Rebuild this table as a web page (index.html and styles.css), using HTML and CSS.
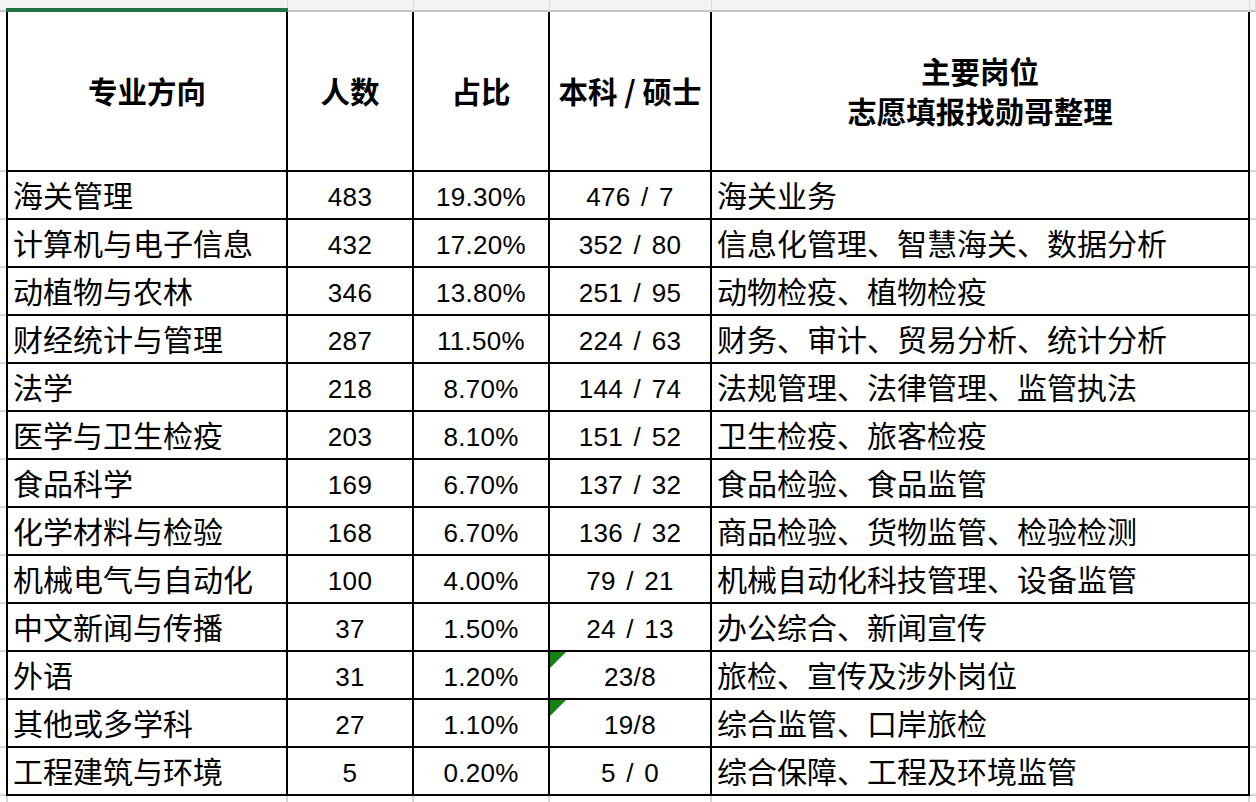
FILE: index.html
```html
<!DOCTYPE html>
<html lang="zh-CN">
<head>
<meta charset="utf-8">
<title>海关专业方向统计</title>
<link rel="stylesheet" href="styles.css">
</head>
<body>
<div class="sheet">
  <div class="colbar">
    <div class="ch ch-corner"></div>
    <div class="ch ch-a"><span class="sel"></span></div>
    <div class="ch ch-b"></div>
    <div class="ch ch-c"></div>
    <div class="ch ch-d"></div>
    <div class="ch ch-e"></div>
    <div class="ch ch-rest"></div>
  </div>
  <div class="main">
    <div class="gutter gutter-left">
      <div></div><div></div><div></div><div></div><div></div><div></div><div></div>
      <div></div><div></div><div></div><div></div><div></div><div></div><div></div>
    </div>
    <div class="grid">
      <div class="h">专业方向</div>
      <div class="h">人数</div>
      <div class="h">占比</div>
      <div class="h">本科 / 硕士</div>
      <div class="h h2">主要岗位<br>志愿填报找勋哥整理</div>

      <div class="t">海关管理</div><div class="n">483</div><div class="n">19.30%</div><div class="n">476 / 7</div><div class="t">海关业务</div>
      <div class="t">计算机与电子信息</div><div class="n">432</div><div class="n">17.20%</div><div class="n">352 / 80</div><div class="t">信息化管理、智慧海关、数据分析</div>
      <div class="t">动植物与农林</div><div class="n">346</div><div class="n">13.80%</div><div class="n">251 / 95</div><div class="t">动物检疫、植物检疫</div>
      <div class="t">财经统计与管理</div><div class="n">287</div><div class="n">11.50%</div><div class="n">224 / 63</div><div class="t">财务、审计、贸易分析、统计分析</div>
      <div class="t">法学</div><div class="n">218</div><div class="n">8.70%</div><div class="n">144 / 74</div><div class="t">法规管理、法律管理、监管执法</div>
      <div class="t">医学与卫生检疫</div><div class="n">203</div><div class="n">8.10%</div><div class="n">151 / 52</div><div class="t">卫生检疫、旅客检疫</div>
      <div class="t">食品科学</div><div class="n">169</div><div class="n">6.70%</div><div class="n">137 / 32</div><div class="t">食品检验、食品监管</div>
      <div class="t">化学材料与检验</div><div class="n">168</div><div class="n">6.70%</div><div class="n">136 / 32</div><div class="t">商品检验、货物监管、检验检测</div>
      <div class="t">机械电气与自动化</div><div class="n">100</div><div class="n">4.00%</div><div class="n">79 / 21</div><div class="t">机械自动化科技管理、设备监管</div>
      <div class="t">中文新闻与传播</div><div class="n">37</div><div class="n">1.50%</div><div class="n">24 / 13</div><div class="t">办公综合、新闻宣传</div>
      <div class="t">外语</div><div class="n">31</div><div class="n">1.20%</div><div class="n flag">23/8</div><div class="t">旅检、宣传及涉外岗位</div>
      <div class="t">其他或多学科</div><div class="n">27</div><div class="n">1.10%</div><div class="n flag">19/8</div><div class="t">综合监管、口岸旅检</div>
      <div class="t">工程建筑与环境</div><div class="n">5</div><div class="n">0.20%</div><div class="n">5 / 0</div><div class="t">综合保障、工程及环境监管</div>
    </div>
    <div class="gutter gutter-right">
      <div></div><div></div><div></div><div></div><div></div><div></div><div></div>
      <div></div><div></div><div></div><div></div><div></div><div></div><div></div>
    </div>
  </div>
  <div class="foot">
    <div class="f f-corner"></div>
    <div class="f f-a"></div>
    <div class="f f-b"></div>
    <div class="f f-c"></div>
    <div class="f f-d"></div>
    <div class="f f-e"></div>
    <div class="f f-rest"></div>
  </div>
</div>
</body>
</html>
```
FILE: styles.css
```css
html, body {
  margin: 0;
  padding: 0;
  background: #ffffff;
}

.sheet {
  width: 1256px;
  height: 802px;
  overflow: hidden;
  font-family: "Noto Sans CJK SC", "Liberation Sans", sans-serif;
  color: #000;
}

/* column header strip */
.colbar {
  display: flex;
  height: 12px;
}
.ch {
  height: 10px;
  background: #f3f3f3;
  border-bottom: 2px solid #c6c6c6;
  border-right: 1px solid #dcdcdc;
  box-sizing: content-box;
  position: relative;
}
.ch-corner { width: 6px; border-right: 0; }
.ch-a { width: 281px; }
.ch-b { width: 125px; }
.ch-c { width: 135px; }
.ch-d { width: 161px; }
.ch-e { width: 537px; }
.ch-rest { width: 5px; }
.sel {
  position: absolute;
  left: 0;
  right: -1px;
  bottom: -2px;
  height: 4px;
  background: #217346;
}

/* body */
.main {
  display: flex;
  align-items: flex-start;
}

.gutter {
  display: grid;
  grid-template-rows: 158px repeat(13, 46px);
  row-gap: 2px;
  background: #d6d6d6;
  padding-bottom: 2px;
}
.gutter div { background: #fff; }
.gutter-left { width: 6px; }
.gutter-right { flex: 1; }

.grid {
  display: grid;
  grid-template-columns: 278px 124px 134px 160px 536px;
  grid-template-rows: 158px repeat(13, 46px);
  gap: 2px;
  background: #000;
  border: 2px solid #000;
  border-top: 0;
}
.grid > div {
  background: #fff;
  display: flex;
  align-items: center;
  position: relative;
  white-space: nowrap;
}

.h {
  justify-content: center;
  text-align: center;
  font-weight: 700;
  font-size: 29.5px;
  line-height: 40px;
  padding-bottom: 2px;
}

.t {
  font-size: 30px;
  line-height: 40px;
  padding-left: 5px;
  padding-bottom: 2px;
}

.n {
  justify-content: center;
  font-family: "Liberation Sans", Arial, sans-serif;
  font-size: 26px;
  letter-spacing: 0.3px;
  word-spacing: 3px;
  line-height: 30px;
  padding-top: 4px;
}

.flag::before {
  content: "";
  position: absolute;
  left: 0;
  top: 0;
  border-style: solid;
  border-width: 16px 16px 0 0;
  border-color: #128012 transparent transparent transparent;
}

/* below the table */
.foot {
  display: flex;
  height: 6px;
}
.f {
  height: 6px;
  border-left: 2px solid #d6d6d6;
}
.f-corner { width: 6px; border-left: 0; }
.f-a { width: 278px; }
.f-b { width: 124px; }
.f-c { width: 134px; }
.f-d { width: 160px; }
.f-e { width: 536px; }
.f-rest { flex: 1; }
```
